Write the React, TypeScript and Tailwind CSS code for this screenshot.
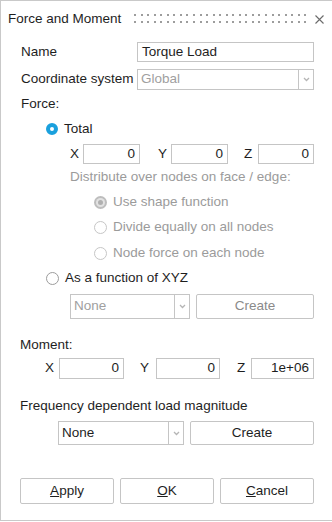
import React from 'react'

const FONT = { fontFamily: "'Liberation Sans', Arial, sans-serif" }

// dialog text inputs
const TextBox: React.FC<{ value: string; className?: string; right?: boolean }> = ({ value, className = '', right }) => (
  <div
    className={`h-full border border-[#c5c5c5] bg-white flex items-center px-[4px] text-[13.5px] text-[#1e1e1e] ${
      right ? 'justify-end' : ''
    } ${className}`}
  >
    {value}
  </div>
)

const Combo: React.FC<{ value: string; width: string; disabled?: boolean }> = ({ value, width, disabled }) => (
  <div className={`h-full flex ${width}`}>
    <div
      className={`flex-1 h-full border border-[#c5c5c5] flex items-center px-[3px] text-[13.5px] ${
        disabled ? 'text-[#a0a0a0]' : 'text-[#1e1e1e]'
      }`}
    >
      {value}
    </div>
    <div className="w-[15px] h-full border border-l-0 border-[#c5c5c5] flex items-center justify-center">
      <svg width="7" height="5" viewBox="0 0 7 5">
        <path d="M1 1 L3.5 3.5 L6 1" stroke="#b5b5b5" strokeWidth="1.3" fill="none" />
      </svg>
    </div>
  </div>
)

const Button: React.FC<{ children: React.ReactNode; className?: string; disabled?: boolean }> = ({
  children,
  className = '',
  disabled,
}) => (
  <div
    className={`h-full border border-[#c5c5c5] rounded-[2px] bg-white flex items-center justify-center text-[13.5px] ${
      disabled ? 'text-[#8a8a8a]' : 'text-[#1e1e1e]'
    } ${className}`}
  >
    {children}
  </div>
)

type RadioKind = 'on' | 'off' | 'disabledOn' | 'disabledOff'

const Radio: React.FC<{ kind: RadioKind }> = ({ kind }) => {
  if (kind === 'on')
    return <div className="w-[12px] h-[12px] rounded-full border-[4px] border-[#1aa0dd] bg-white" />
  if (kind === 'disabledOn')
    return (
      <div className="w-[13px] h-[13px] rounded-full bg-[#bdbdbd] flex items-center justify-center">
        <div className="w-[9px] h-[9px] rounded-full bg-[#e2e2e2] flex items-center justify-center">
          <div className="w-[5px] h-[5px] rounded-full bg-[#b0b0b0]" />
        </div>
      </div>
    )
  return (
    <div
      className={`w-[13px] h-[13px] rounded-full border bg-white ${
        kind === 'off' ? 'border-[#9c9c9c]' : 'border-[#c6c6c6]'
      }`}
    />
  )
}

const RadioRow: React.FC<{ kind: RadioKind; label: string; className?: string }> = ({ kind, label, className = '' }) => (
  <div className={`h-[18px] flex items-center ${className}`}>
    <Radio kind={kind} />
    <span
      className={`ml-[6px] text-[13.5px] ${
        kind === 'on' || kind === 'off' ? 'text-[#1e1e1e]' : 'text-[#9b9b9b]'
      }`}
    >
      {label}
    </span>
  </div>
)

const Grip: React.FC = () => {
  const dots = Array.from({ length: 27 }, (_, i) => 1 + i * 6.55)
  return (
    <svg width="174" height="10" viewBox="0 0 174 10">
      {dots.map((x, i) => (
        <g key={i} fill="#9d9d9d">
          <rect x={Math.round(x)} y="0" width="2" height="2" />
          <rect x={Math.round(x)} y="7" width="2" height="2" />
        </g>
      ))}
    </svg>
  )
}

export default function App() {
  return (
    <div className="w-[332px] h-[522px] bg-white" style={FONT}>
      <div className="h-[521px] border-t border-l border-b border-[#c9c9c9] flex flex-col">
        {/* Title bar */}
        <div className="h-[36px] flex items-center pl-[7px] pr-[8px]">
          <span className="text-[13.5px] text-[#1e1e1e]">Force and Moment</span>
          <div className="ml-auto flex items-center">
            <Grip />
            <svg className="ml-[8px]" width="9" height="9" viewBox="0 0 9 9">
              <path d="M0.5 0.5 L8.5 8.5 M8.5 0.5 L0.5 8.5" stroke="#6b6b6b" strokeWidth="1.1" />
            </svg>
          </div>
        </div>

        <div className="pl-[19px] pr-[18px] flex flex-col text-[13.5px] text-[#1e1e1e]">
          {/* Name */}
          <div className="mt-[5px] h-[20px] flex items-center">
            <span className="w-[117px] pl-[1px]">Name</span>
            <TextBox value="Torque Load" className="flex-1" />
          </div>

          {/* Coordinate system */}
          <div className="mt-[7px] h-[21px] flex items-center">
            <span className="w-[117px] pl-[1px] whitespace-nowrap">Coordinate system</span>
            <Combo value="Global" width="flex-1" disabled />
          </div>

          <div className="mt-[6px] h-[16px] flex items-center pl-[1px]">Force:</div>

          <div className="ml-[26px] flex flex-col">
            <RadioRow kind="on" label="Total" className="mt-[8px]" />

            {/* XYZ force */}
            <div className="mt-[6px] h-[20px] flex items-center pl-[24px]">
              <span className="w-[13px]">X</span>
              <TextBox value="0" right className="w-[57px]" />
              <span className="w-[31px] pl-[18px]">Y</span>
              <TextBox value="0" right className="w-[57px]" />
              <span className="w-[30px] pl-[16px]">Z</span>
              <TextBox value="0" right className="flex-1" />
            </div>

            <div className="mt-[5px] h-[16px] flex items-center pl-[24px] text-[#9b9b9b] whitespace-nowrap">
              Distribute over nodes on face / edge:
            </div>

            <div className="pl-[48px] flex flex-col">
              <RadioRow kind="disabledOn" label="Use shape function" className="mt-[8px]" />
              <RadioRow kind="disabledOff" label="Divide equally on all nodes" className="mt-[7px]" />
              <RadioRow kind="disabledOff" label="Node force on each node" className="mt-[8px]" />
            </div>

            <RadioRow kind="off" label="As a function of XYZ" className="mt-[7px]" />

            <div className="mt-[7px] h-[25px] flex items-center pl-[24px] gap-[6px]">
              <Combo value="None" width="w-[120px] h-[24px]" disabled />
              <Button disabled className="flex-1">
                Create
              </Button>
            </div>
          </div>

          <div className="mt-[18px] h-[16px] flex items-center">Moment:</div>

          {/* XYZ moment */}
          <div className="mt-[5px] h-[21px] flex items-center pl-[25px]">
            <span className="w-[14px]">X</span>
            <TextBox value="0" right className="w-[65px]" />
            <span className="w-[32px] pl-[16px]">Y</span>
            <TextBox value="0" right className="w-[64px]" />
            <span className="w-[31px] pl-[17px]">Z</span>
            <TextBox value="1e+06" right className="flex-1" />
          </div>

          <div className="mt-[19px] h-[16px] flex items-center whitespace-nowrap">
            Frequency dependent load magnitude
          </div>

          <div className="mt-[7px] h-[24px] flex items-center pl-[38px] gap-[6px]">
            <Combo value="None" width="w-[126px] h-[24px]" />
            <Button className="flex-1">Create</Button>
          </div>

          {/* Dialog buttons */}
          <div className="mt-[33px] h-[26px] flex gap-[6px]">
            <Button className="flex-1">
              <span>
                <u>A</u>pply
              </span>
            </Button>
            <Button className="flex-1">
              <span>
                <u>O</u>K
              </span>
            </Button>
            <Button className="flex-1">
              <span>
                <u>C</u>ancel
              </span>
            </Button>
          </div>
        </div>
      </div>
    </div>
  )
}
